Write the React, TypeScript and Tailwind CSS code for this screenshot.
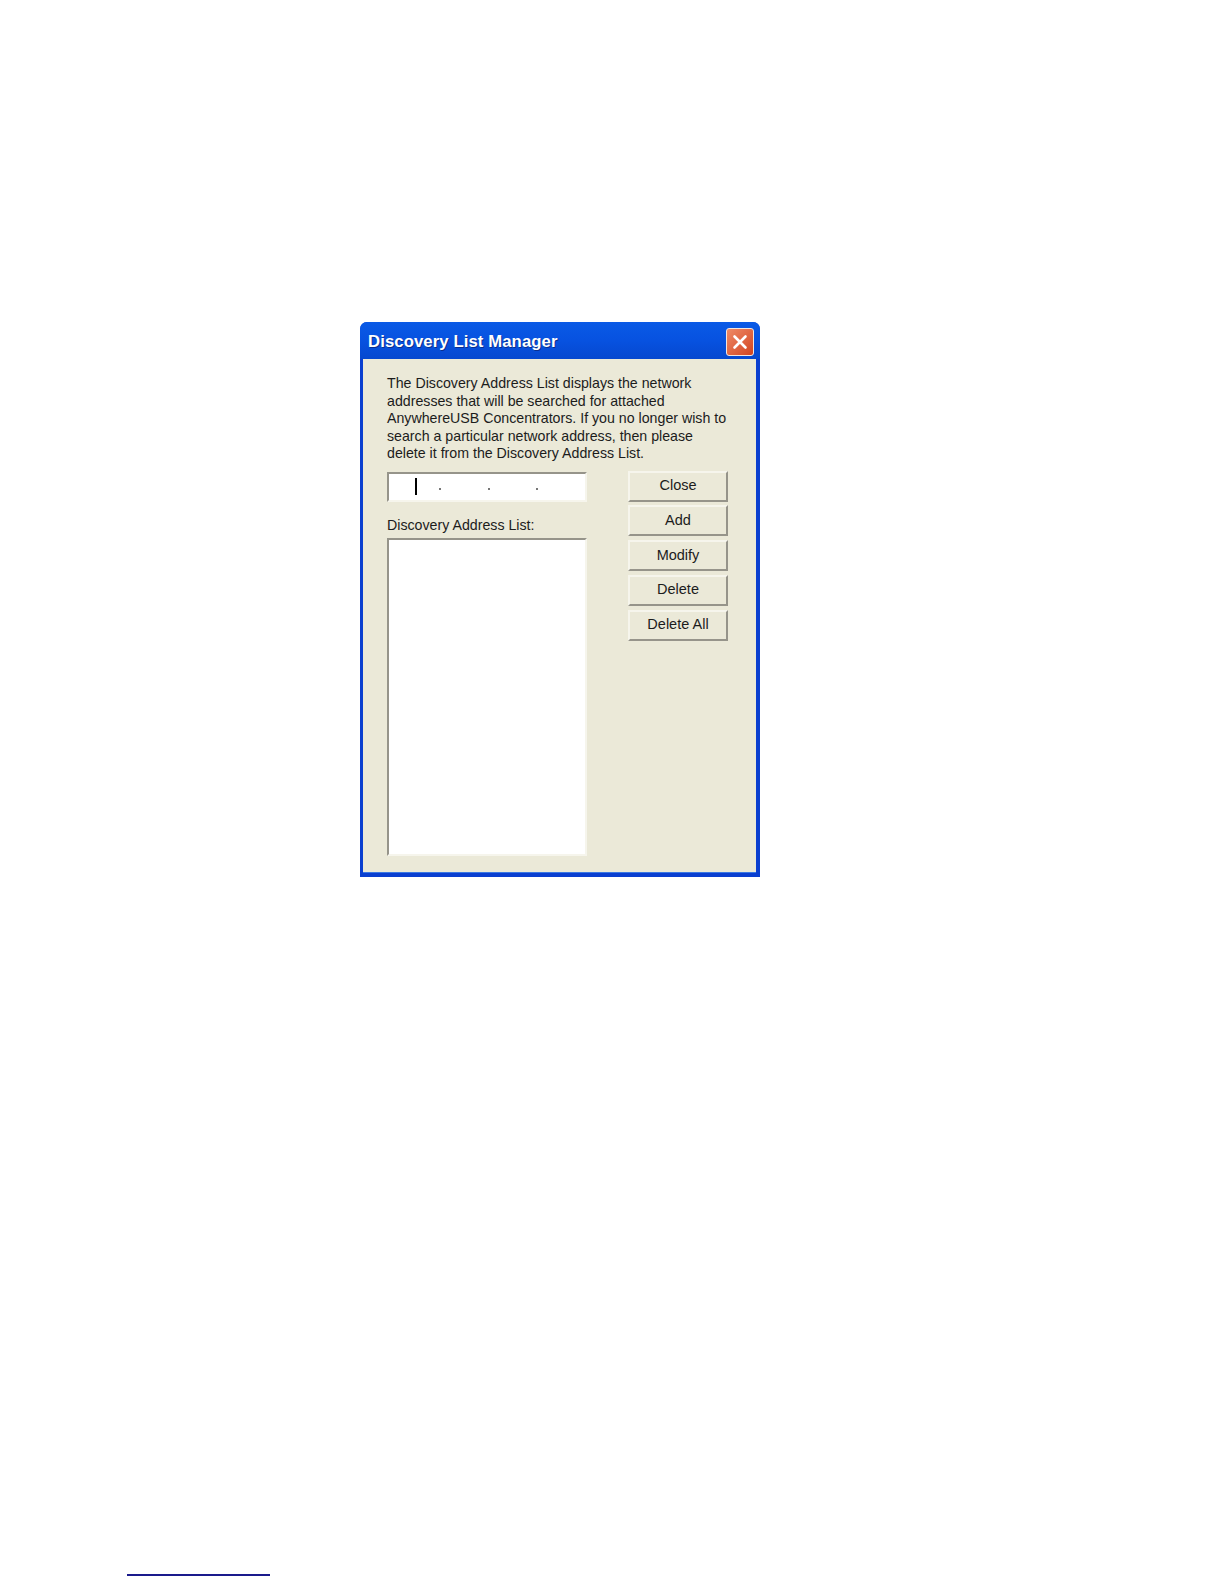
const BUTTONS = ["Close", "Add", "Modify", "Delete", "Delete All"];

function SunkenBox({ className, children }: { className: string; children?: React.ReactNode }) {
  return (
    <div className={`border-2 border-t-[#96948a] border-l-[#96948a] border-r-[#f6f5ec] border-b-[#f6f5ec] bg-white ${className}`}>
      {children}
    </div>
  );
}

function CloseIcon() {
  return (
    <div className="flex h-[28px] w-[28px] items-center justify-center rounded-[3px] border border-[#f2e6e0] bg-gradient-to-br from-[#ee8a66] to-[#d2421c]">
      <svg width="18" height="18" viewBox="0 0 18 18">
        <path d="M3.5 3.5 L14.5 14.5 M14.5 3.5 L3.5 14.5" stroke="#ffffff" strokeWidth="2.6" strokeLinecap="round" />
      </svg>
    </div>
  );
}

export default function App() {
  return (
    <div className="flex h-[1584px] w-[1224px] flex-col bg-white pt-[322px] font-['Liberation_Sans',sans-serif]">
      {/* dialog */}
      <div className="ml-[360px] flex h-[555px] w-[400px] flex-col rounded-t-[7px] bg-[#0a3fd0]">
        <div className="flex h-[37px] items-center justify-between rounded-t-[7px] bg-gradient-to-b from-[#0a5ae6] via-[#0752e0] to-[#0648cf] pl-[8px] pr-[6px] pt-[2px]">
          <span className="text-[16.7px] font-bold tracking-[0.1px] text-white [text-shadow:1px_1px_0_#0a2f8f]">
            Discovery List Manager
          </span>
          <CloseIcon />
        </div>

        <div className="ml-[3px] mr-[4px] h-[514px] border-b border-[#3a78e4] bg-[#ebe9d8] pl-[24px] pt-[16px] text-[#1c1c1c]">
          <p className="whitespace-nowrap text-[14.2px] leading-[17.5px]">
            The Discovery Address List displays the network
            <br />
            addresses that will be searched for attached
            <br />
            AnywhereUSB Concentrators. If you no longer wish to
            <br />
            search a particular network address, then please
            <br />
            delete it from the Discovery Address List.
          </p>

          <div className="mt-[8px] flex gap-[41px]">
            <div className="mt-px flex w-[200px] flex-col">
              <SunkenBox className="relative flex h-[30px] items-center">
                <div className="ml-[26px] h-[17px] w-[1.5px] bg-black" />
                <div className="absolute left-[50px] top-[14px] h-[2px] w-[1.5px] bg-[#777777]" />
                <div className="absolute left-[99px] top-[14px] h-[2px] w-[1.5px] bg-[#777777]" />
                <div className="absolute left-[147px] top-[14px] h-[2px] w-[1.5px] bg-[#777777]" />
              </SunkenBox>
              <div className="mt-[15px] text-[14.2px] leading-[17.5px]">Discovery Address List:</div>
              <SunkenBox className="mt-[4px] h-[318px]" />
            </div>

            <div className="flex w-[100px] flex-col gap-[3.75px]">
              {BUTTONS.map((label) => (
                <button
                  key={label}
                  className="h-[31px] border-2 border-t-[#f6f5ec] border-l-[#f6f5ec] border-r-[#96948a] border-b-[#96948a] bg-[#ebe9d8] text-[14.5px] text-[#1c1c1c]"
                >
                  {label}
                </button>
              ))}
            </div>
          </div>
        </div>
      </div>

      {/* footnote rule at the bottom of the page */}
      <div className="ml-[127px] mt-[697px] h-[2px] w-[143px] bg-[#1a1a8c]" />
    </div>
  );
}
